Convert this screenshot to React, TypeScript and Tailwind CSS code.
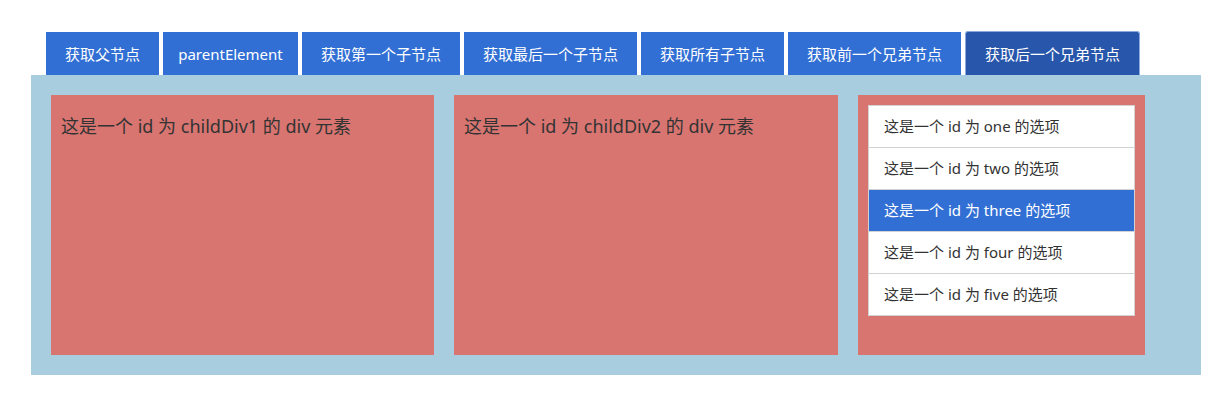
const tabs = [
  { label: "获取父节点", w: "w-[113px]" },
  { label: "parentElement", w: "w-[135px]" },
  { label: "获取第一个子节点", w: "w-[158px]" },
  { label: "获取最后一个子节点", w: "w-[173px]" },
  { label: "获取所有子节点", w: "w-[143px]" },
  { label: "获取前一个兄弟节点", w: "w-[173px]" },
];

const options = ["one", "two", "three", "four", "five"];

export default function App() {
  return (
    <div
      className="min-h-[401px] bg-white pt-[31px] pl-[31px]"
      style={{ fontFamily: '"Noto Sans", "Noto Sans CJK SC", sans-serif' }}
    >
      <div className="flex items-end gap-[4px] pl-[15px]">
        {tabs.map((t) => (
          <div
            key={t.label}
            className={`${t.w} h-[43px] flex items-center justify-center pt-[1px] bg-[#316fd4] text-white text-[15px]`}
          >
            {t.label}
          </div>
        ))}
        <div className="w-[175px] h-[44px] flex items-center justify-center pt-[1px] bg-[#2756ab] text-white text-[15px] border border-b-0 border-[#8aa9de] rounded-t-[3px]">
          获取后一个兄弟节点
        </div>
      </div>

      <div className="w-[1170px] h-[300px] bg-[#a7cddf] p-[20px] flex gap-[20px]">
        <div className="w-[383px] h-[260px] bg-[#d87571] p-[10px] pt-[18px] text-[18px] text-[#333]">
          这是一个 id 为 childDiv1 的 div 元素
        </div>
        <div className="w-[384px] h-[260px] bg-[#d87571] p-[10px] pt-[18px] text-[18px] text-[#333]">
          这是一个 id 为 childDiv2 的 div 元素
        </div>
        <div className="w-[287px] h-[260px] bg-[#d87571] p-[10px]">
          <ul className="border border-[#d2d2d2] bg-white">
            {options.map((o, i) => (
              <li
                key={o}
                className={`flex items-center pl-[15px] text-[15px] ${
                  i > 0 ? "h-[42px] border-t border-[#d2d2d2]" : "h-[41px]"
                } ${o === "three" ? "bg-[#316fd4] text-white" : "text-[#333]"}`}
              >
                这是一个 id 为 {o} 的选项
              </li>
            ))}
          </ul>
        </div>
      </div>
    </div>
  );
}
